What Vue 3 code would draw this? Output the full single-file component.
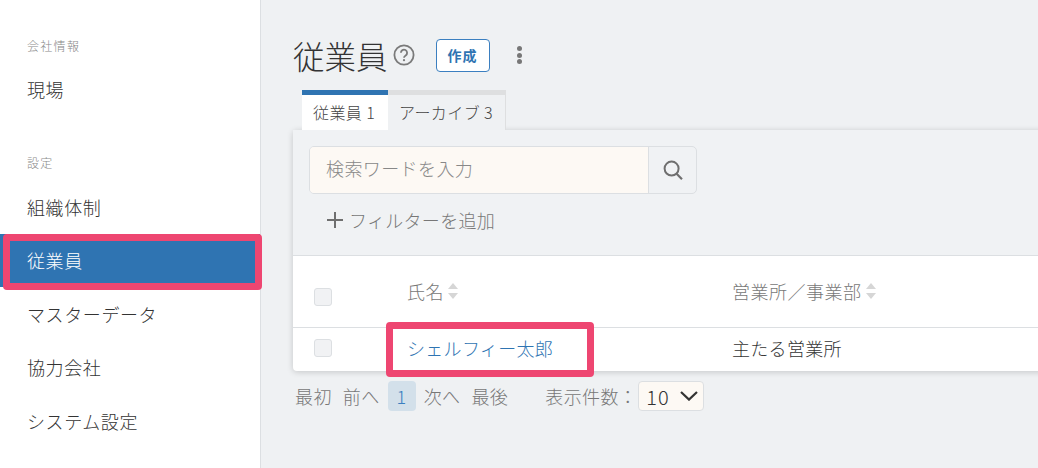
<script setup>
const topLinks = ["現場"];
const settingLinks = [
  { label: "組織体制" },
  { label: "従業員", active: true },
  { label: "マスターデータ" },
  { label: "協力会社" },
  { label: "システム設定" },
];
</script>

<template>
  <div class="page">
    <aside class="sidebar">
      <div class="group-label first">会社情報</div>
      <a v-for="l in topLinks" :key="l" class="side-link">{{ l }}</a>
      <div class="group-label second">設定</div>
      <a
        v-for="l in settingLinks"
        :key="l.label"
        class="side-link"
        :class="{ active: l.active }"
      >
        {{ l.label }}
        <span v-if="l.active" class="mark mark-side"></span>
      </a>
    </aside>

    <main class="main">
      <div class="title-row">
        <h1>従業員</h1>
        <svg class="help" viewBox="0 0 22 22" width="22" height="22">
          <circle cx="11" cy="11" r="9.600" fill="none" stroke="#7a7a7a" stroke-width="1.800" />
          <path d="M7.900 8.800a3.100 3.100 0 1 1 4.800 2.600c-1.100.7-1.700 1.200-1.700 2.400" fill="none" stroke="#7a7a7a" stroke-width="1.800" />
          <circle cx="11" cy="16.200" r="1.100" fill="#7a7a7a" />
        </svg>
        <button class="create">作成</button>
        <div class="dots"><i></i><i></i><i></i></div>
      </div>

      <div class="tabs">
        <div class="tab current">従業員 1</div>
        <div class="tab">アーカイブ 3</div>
      </div>

      <section class="panel">
        <div class="search-area">
          <div class="search">
            <div class="search-input">検索ワードを入力</div>
            <div class="search-btn">
              <svg viewBox="0 0 22 22" width="22" height="22">
                <circle cx="9.600" cy="9.600" r="7" fill="none" stroke="#6f6f6f" stroke-width="2" />
                <path d="M14.600 14.800l5.400 5.400" stroke="#6f6f6f" stroke-width="2.200" />
              </svg>
            </div>
          </div>
          <div class="add-filter">
            <svg viewBox="0 0 16 16" width="16" height="16">
              <path d="M8 0v16M0 8h16" stroke="#6f6f6f" stroke-width="2" />
            </svg>
            フィルターを追加
          </div>
        </div>

        <div class="table">
          <div class="tr head">
            <div class="cell check"><span class="box"></span></div>
            <div class="cell name">氏名<span class="sort"></span></div>
            <div class="cell office">営業所／事業部<span class="sort"></span></div>
          </div>
          <div class="tr body">
            <div class="cell check"><span class="box"></span></div>
            <div class="cell name">
              <a class="link">シェルフィー太郎</a>
              <span class="mark mark-name"></span>
            </div>
            <div class="cell office">主たる営業所</div>
          </div>
        </div>
      </section>

      <div class="pager">
        <span class="pg">最初</span>
        <span class="pg">前へ</span>
        <span class="pg-current">1</span>
        <span class="pg">次へ</span>
        <span class="pg">最後</span>
        <span class="per-label">表示件数：</span>
        <div class="select">
          10
          <svg viewBox="0 0 18 10" width="18" height="10">
            <path d="M1 1l8 7.600L17 1" fill="none" stroke="#333" stroke-width="2.200" />
          </svg>
        </div>
      </div>
    </main>
  </div>
</template>

<style>
html,
body {
  margin: 0;
  background: #eff1f3;
  overflow: hidden;
}
</style>

<style scoped>
* {
  box-sizing: border-box;
}
.page {
  display: flex;
  width: 1038px;
  height: 468px;
  overflow: hidden;
  background: #eff1f3;
  color: #333;
  font-family: "Noto Sans CJK JP", "Noto Sans", sans-serif;
  font-weight: 300;
}
.sidebar {
  flex: none;
  width: 261px;
  height: 468px;
  background: #fff;
  border-right: 1px solid #dcdfe2;
}
.group-label {
  padding-left: 27px;
  font-size: 12px;
  line-height: 18px;
  letter-spacing: 1.300px;
  color: #888;
}
.group-label.first {
  margin-top: 37px;
  margin-bottom: 7px;
}
.group-label.second {
  margin-top: 38px;
  margin-bottom: 8.500px;
}
.side-link {
  position: relative;
  display: flex;
  align-items: center;
  height: 53.500px;
  padding-left: 27px;
  font-size: 18px;
  letter-spacing: 0.600px;
  color: #333;
}
.side-link.active {
  background: #2f74b2;
  color: #fff;
}
.mark {
  position: absolute;
  border: 7px solid #ee4671;
  border-radius: 4px;
}
.mark-side {
  left: 3px;
  top: 0.500px;
  width: 259px;
  height: 56px;
}
.main {
  flex: 1;
  min-width: 0;
  padding: 30px 0 0 32px;
}
.title-row {
  display: flex;
  align-items: center;
  height: 50px;
}
h1 {
  margin: 0;
  font-size: 31.500px;
  font-weight: 300;
  line-height: 50px;
  color: #333;
}
.help {
  margin-left: 5px;
}
.create {
  width: 54px;
  height: 33px;
  margin-left: 21px;
  padding: 0;
  background: #fff;
  border: 1px solid #3b7fc0;
  border-radius: 4px;
  color: #2f74b2;
  font-family: inherit;
  font-size: 14px;
  font-weight: 700;
  letter-spacing: 1px;
}
.dots {
  display: flex;
  flex-direction: column;
  gap: 1.500px;
  margin-left: 27px;
}
.dots i {
  width: 5px;
  height: 5px;
  border-radius: 50%;
  background: #777;
}
.tabs {
  display: flex;
  margin-top: 10px;
  margin-left: 9px;
}
.tab {
  height: 40px;
  padding: 0 12px 0 11px;
  background: #eff1f3;
  border-top: 5px solid #dedfe0;
  border-right: 1px solid #dedfe0;
  font-size: 16px;
  line-height: 34px;
  letter-spacing: 0.400px;
  color: #444;
  white-space: nowrap;
}
.tab.current {
  width: 86px;
  background: #fff;
  border-top-color: #2f74b2;
  border-right: 0;
}
.panel {
  width: 800px;
  height: 241px;
  background: #fff;
  border-radius: 4px 0 0 4px;
  box-shadow: 0 1px 6px rgba(0, 0, 0, 0.18);
}
.search-area {
  height: 126px;
  padding: 16px 0 0 16px;
  background: #f0f2f4;
  border-bottom: 1px solid #dcdfe2;
}
.search {
  display: flex;
  width: 388px;
  height: 48px;
  border: 1px solid #dcdfe2;
  border-radius: 5px;
  overflow: hidden;
}
.search-input {
  flex: 1;
  padding-left: 16px;
  background: #fdf9f4;
  font-size: 18px;
  line-height: 43px;
  letter-spacing: 0.400px;
  color: #888;
}
.search-btn {
  display: flex;
  align-items: center;
  justify-content: center;
  width: 48px;
  border-left: 1px solid #dcdfe2;
}
.add-filter {
  display: flex;
  align-items: center;
  gap: 6px;
  margin-top: 14px;
  padding-left: 18px;
  font-size: 18px;
  line-height: 24px;
  letter-spacing: 0.300px;
  color: #777;
}
.tr {
  display: flex;
  align-items: center;
}
.head {
  height: 72px;
  border-bottom: 1px solid #dcdfe2;
  font-size: 18px;
  letter-spacing: 0.500px;
  color: #777;
}
.head .name,
.head .office {
  padding-bottom: 2px;
}
.body {
  height: 43px;
  padding-bottom: 3px;
  font-size: 18px;
  letter-spacing: 0.300px;
}
.cell {
  position: relative;
  display: flex;
  align-items: center;
}
.check {
  width: 114px;
  padding-left: 21px;
}
.head .check {
  padding-top: 10px;
}
.box {
  width: 18px;
  height: 18px;
  background: #f1f2f4;
  border: 1px solid #dcdfe2;
  border-radius: 3px;
}
.name {
  width: 325px;
}
.sort {
  position: relative;
  width: 11px;
  height: 16px;
  margin-left: 4px;
}
.sort::before,
.sort::after {
  content: "";
  position: absolute;
  left: 0;
  border-left: 5.500px solid transparent;
  border-right: 5.500px solid transparent;
}
.sort::before {
  top: 0;
  border-bottom: 6px solid #d6d6d6;
}
.sort::after {
  bottom: 0;
  border-top: 6px solid #d6d6d6;
}
.link {
  color: #2f74b2;
}
.mark-name {
  left: -21px;
  top: -13px;
  width: 208px;
  height: 55px;
}
.pager {
  display: flex;
  align-items: center;
  height: 30px;
  margin-top: 10px;
  padding-left: 2px;
  font-size: 18px;
  letter-spacing: 0.400px;
  color: #777;
}
.pg {
  margin-right: 11px;
}
.pg-current {
  display: flex;
  align-items: center;
  justify-content: center;
  width: 28px;
  height: 30px;
  margin: 0 8px 0 -3px;
  background: #d3e0ea;
  border-radius: 4px;
  color: #3b7fc0;
}
.per-label {
  margin-left: 26px;
  margin-right: 1px;
}
.select {
  display: flex;
  align-items: center;
  justify-content: space-between;
  width: 66px;
  height: 30px;
  padding: 0 5px 0 7px;
  background: #fdf9f4;
  border: 1px solid #dcdfe2;
  border-radius: 4px;
  font-size: 20px;
  letter-spacing: 1px;
  color: #333;
}
</style>
